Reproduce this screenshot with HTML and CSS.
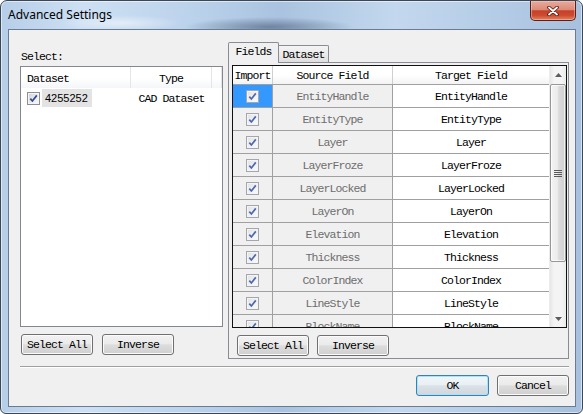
FILE: index.html
```html
<!DOCTYPE html>
<html>
<head>
<meta charset="utf-8">
<title>Advanced Settings</title>
<link rel="stylesheet" href="styles.css">
</head>
<body>
<div class="window">
  <div class="titlebar">
    <span class="title">Advanced Settings</span>
    <div class="close">
      <svg width="12" height="10" viewBox="0 0 12 10"><path d="M2 1.5 L10 8.5 M10 1.5 L2 8.5" stroke="#5a1a10" stroke-width="3.6" stroke-linecap="round"/><path d="M2 1.5 L10 8.5 M10 1.5 L2 8.5" stroke="#ffffff" stroke-width="1.8" stroke-linecap="round"/></svg>
    </div>
  </div>
  <div class="client">
    <div class="top">
      <div class="left">
        <div class="label">Select:</div>
        <div class="listview">
          <div class="lv-head">
            <div class="lv-c1 lv-h">Dataset</div>
            <div class="lv-c2 lv-h">Type</div>
            <div class="lv-c3"></div>
          </div>
          <div class="lv-row">
            <div class="lv-c1"><span class="cb"><svg width="11" height="11" viewBox="0 0 11 11"><path d="M2.3 5.6 L4.4 8 L8.8 2.4" fill="none" stroke="#2d4c96" stroke-width="1.7"/></svg></span><span class="sel">4255252</span></div>
            <div class="lv-c2">CAD Dataset</div>
          </div>
        </div>
        <div class="btnrow lb">
          <button class="btn">Select All</button>
          <button class="btn">Inverse</button>
        </div>
      </div>
      <div class="right">
        <div class="tabs">
          <div class="tab active">Fields</div>
          <div class="tab">Dataset</div>
        </div>
        <div class="page">
          <div class="grid">
            <div class="gtable">
              <div class="grow ghead">
                <div class="gc gi">Import</div>
                <div class="gc gs">Source Field</div>
                <div class="gc gt">Target Field</div>
              </div>
              <div class="grow"><div class="gc gi selcell"><span class="cb dim"><svg width="11" height="11" viewBox="0 0 11 11"><path d="M2.3 5.6 L4.4 8 L8.8 2.4" fill="none" stroke="#4d68ad" stroke-width="1.7"/></svg></span></div><div class="gc gs">EntityHandle</div><div class="gc gt">EntityHandle</div></div>
              <div class="grow"><div class="gc gi"><span class="cb dim"><svg width="11" height="11" viewBox="0 0 11 11"><path d="M2.3 5.6 L4.4 8 L8.8 2.4" fill="none" stroke="#4d68ad" stroke-width="1.7"/></svg></span></div><div class="gc gs">EntityType</div><div class="gc gt">EntityType</div></div>
              <div class="grow"><div class="gc gi"><span class="cb dim"><svg width="11" height="11" viewBox="0 0 11 11"><path d="M2.3 5.6 L4.4 8 L8.8 2.4" fill="none" stroke="#4d68ad" stroke-width="1.7"/></svg></span></div><div class="gc gs">Layer</div><div class="gc gt">Layer</div></div>
              <div class="grow"><div class="gc gi"><span class="cb dim"><svg width="11" height="11" viewBox="0 0 11 11"><path d="M2.3 5.6 L4.4 8 L8.8 2.4" fill="none" stroke="#4d68ad" stroke-width="1.7"/></svg></span></div><div class="gc gs">LayerFroze</div><div class="gc gt">LayerFroze</div></div>
              <div class="grow"><div class="gc gi"><span class="cb dim"><svg width="11" height="11" viewBox="0 0 11 11"><path d="M2.3 5.6 L4.4 8 L8.8 2.4" fill="none" stroke="#4d68ad" stroke-width="1.7"/></svg></span></div><div class="gc gs">LayerLocked</div><div class="gc gt">LayerLocked</div></div>
              <div class="grow"><div class="gc gi"><span class="cb dim"><svg width="11" height="11" viewBox="0 0 11 11"><path d="M2.3 5.6 L4.4 8 L8.8 2.4" fill="none" stroke="#4d68ad" stroke-width="1.7"/></svg></span></div><div class="gc gs">LayerOn</div><div class="gc gt">LayerOn</div></div>
              <div class="grow"><div class="gc gi"><span class="cb dim"><svg width="11" height="11" viewBox="0 0 11 11"><path d="M2.3 5.6 L4.4 8 L8.8 2.4" fill="none" stroke="#4d68ad" stroke-width="1.7"/></svg></span></div><div class="gc gs">Elevation</div><div class="gc gt">Elevation</div></div>
              <div class="grow"><div class="gc gi"><span class="cb dim"><svg width="11" height="11" viewBox="0 0 11 11"><path d="M2.3 5.6 L4.4 8 L8.8 2.4" fill="none" stroke="#4d68ad" stroke-width="1.7"/></svg></span></div><div class="gc gs">Thickness</div><div class="gc gt">Thickness</div></div>
              <div class="grow"><div class="gc gi"><span class="cb dim"><svg width="11" height="11" viewBox="0 0 11 11"><path d="M2.3 5.6 L4.4 8 L8.8 2.4" fill="none" stroke="#4d68ad" stroke-width="1.7"/></svg></span></div><div class="gc gs">ColorIndex</div><div class="gc gt">ColorIndex</div></div>
              <div class="grow"><div class="gc gi"><span class="cb dim"><svg width="11" height="11" viewBox="0 0 11 11"><path d="M2.3 5.6 L4.4 8 L8.8 2.4" fill="none" stroke="#4d68ad" stroke-width="1.7"/></svg></span></div><div class="gc gs">LineStyle</div><div class="gc gt">LineStyle</div></div>
              <div class="grow"><div class="gc gi"><span class="cb dim"><svg width="11" height="11" viewBox="0 0 11 11"><path d="M2.3 5.6 L4.4 8 L8.8 2.4" fill="none" stroke="#4d68ad" stroke-width="1.7"/></svg></span></div><div class="gc gs">BlockName</div><div class="gc gt">BlockName</div></div>
            </div>
            <div class="vscroll">
              <div class="sbtn"><svg width="7" height="4" viewBox="0 0 7 4"><path d="M0 4 L3.5 0 L7 4 Z" fill="#5c5c5c"/></svg></div>
              <div class="thumb">
                <svg width="8" height="7" viewBox="0 0 8 7"><path d="M0 0.5 H8 M0 2.5 H8 M0 4.5 H8 M0 6.5 H8" stroke="#5a5a5a" stroke-width="1"/></svg>
              </div>
              <div class="track"></div>
              <div class="sbtn"><svg width="7" height="4" viewBox="0 0 7 4"><path d="M0 0 L3.5 4 L7 0 Z" fill="#5c5c5c"/></svg></div>
            </div>
          </div>
          <div class="btnrow rb">
            <button class="btn">Select All</button>
            <button class="btn">Inverse</button>
          </div>
        </div>
      </div>
    </div>
    <div class="sep"></div>
    <div class="footer">
      <button class="btn ok">OK</button>
      <button class="btn cancel">Cancel</button>
    </div>
  </div>
</div>
</body>
</html>
```
FILE: styles.css
```css
* { box-sizing: border-box; }
html, body { margin: 0; padding: 0; }
body {
  width: 583px;
  height: 414px;
  overflow: hidden;
  background: #ffffff;
  font-family: "Liberation Mono", "DejaVu Sans Mono", monospace;
  font-size: 11.5px;
  letter-spacing: -0.9px;
  color: #000;
}
.window {
  width: 583px;
  height: 414px;
  border: 1px solid #3b4657;
  border-radius: 7px 7px 6px 6px;
  padding: 0 6px 6px 7px;
  display: flex;
  flex-direction: column;
  background:
    radial-gradient(ellipse 85px 10px at 268px 26px, rgba(60, 78, 105, 0.55), rgba(60, 78, 105, 0)),
    radial-gradient(ellipse 60px 8px at 120px 22px, rgba(255, 255, 255, 0.5), rgba(255, 255, 255, 0)),
    linear-gradient(90deg, #b6cee8 0%, #cde0f3 14%, #bcd3ec 32%, #a9c3e0 48%, #c3d8ee 68%, #b2cae5 88%, #a6c0dd 100%);
  box-shadow: inset 0 0 0 1px rgba(255, 255, 255, 0.55);
}
.titlebar {
  height: 28px;
  flex: none;
  display: flex;
  align-items: flex-start;
}
.title {
  font-family: "Noto Sans", "Liberation Sans", sans-serif;
  font-size: 12px;
  letter-spacing: 0;
  line-height: 16px;
  margin-top: 6px;
  color: #000;
}
.close {
  margin-left: auto;
  width: 46px;
  height: 20px;
  border: 1px solid #5b1f15;
  border-top: none;
  border-radius: 0 0 5px 5px;
  background: linear-gradient(#e8aa9c 0%, #dc8b78 45%, #c5412a 52%, #cd4a2f 75%, #e2835f 100%);
  box-shadow: inset 0 0 0 1px rgba(255, 210, 200, 0.45);
  display: flex;
  align-items: center;
  justify-content: center;
}
.client {
  flex: 1;
  background: #f0f0f0;
  border: 1px solid #6b7b91;
  display: flex;
  flex-direction: column;
  padding: 12px 6px 0 11px;
}
.top {
  display: flex;
  gap: 5px;
  height: 317px;
  flex: none;
}
.left {
  width: 203px;
  display: flex;
  flex-direction: column;
}
.label {
  margin-top: 8px;
  margin-left: 1px;
  height: 14px;
  line-height: 14px;
}
.listview {
  margin-top: 2px;
  height: 261px;
  border: 1px solid #828790;
  background: #fff;
}
.lv-head {
  display: flex;
  height: 21px;
  background: linear-gradient(#ffffff 0%, #ffffff 55%, #f4f6f9 100%);
}
.lv-h { line-height: 21px; padding-top: 1px; }
.lv-c1 {
  width: 110px;
  padding-left: 6px;
  display: flex;
  align-items: center;
}
.lv-c2 {
  width: 81px;
  text-align: center;
  display: flex;
  align-items: center;
  justify-content: center;
}
.lv-head .lv-c1, .lv-head .lv-c2 { border-right: 1px solid #e2e5ea; }
.lv-c3 { flex: 1; border-right: 1px solid #e2e5ea; }
.lv-row {
  display: flex;
  height: 18px;
  margin-top: 1px;
}
.cb {
  width: 13px;
  height: 13px;
  border: 1px solid #8e8f8f;
  background: linear-gradient(135deg, #cdd1d6 0%, #eeeeef 60%, #f8f8f8 100%);
  box-shadow: inset 0 0 0 1px #f4f4f4;
  display: inline-flex;
  flex: none;
}
.cb.dim {
  border-color: #a3a7ad;
  background: linear-gradient(135deg, #dde0e4 0%, #f3f3f4 60%, #fafafa 100%);
}
.sel {
  margin-left: 2px;
  height: 18px;
  line-height: 18px;
  padding: 0 4px 0 3px;
  background: #e3e3e3;
  font-family: "Liberation Sans", Arial, sans-serif;
  font-size: 11px;
  letter-spacing: 0;
}
.btnrow {
  display: flex;
  flex: none;
}
.btnrow.lb { margin-top: 7px; margin-left: 1px; gap: 9px; }
.btnrow.rb { margin-top: 7px; padding-left: 5px; gap: 8px; }
.btn {
  width: 72px;
  height: 21px;
  padding: 1px 0 0;
  border: 1px solid #707070;
  border-radius: 3px;
  background: linear-gradient(#f2f2f2 0%, #ebebeb 45%, #dddddd 52%, #cfcfcf 100%);
  box-shadow: inset 0 0 0 1px #fbfbfb;
  font-family: inherit;
  font-size: 11.5px;
  letter-spacing: -0.9px;
  color: #000;
  line-height: 18px;
}
.btn.ok {
  width: 73px;
  border-color: #3c7fb1;
  box-shadow: inset 0 0 0 1px #a5e4fb;
  background: linear-gradient(#f1f6f9 0%, #e9eff3 45%, #dae2e8 52%, #cfd7dd 100%);
}
.right {
  width: 341px;
  display: flex;
  flex-direction: column;
}
.tabs {
  height: 21px;
  display: flex;
  align-items: flex-end;
  margin-bottom: -1px;
  position: relative;
  z-index: 1;
  flex: none;
}
.tab {
  width: 50px;
  height: 17px;
  margin-bottom: 1px;
  border: 1px solid #898c95;
  border-bottom: none;
  border-left: none;
  border-radius: 0 2px 0 0;
  background: linear-gradient(#f4f4f4 0%, #ebebeb 50%, #dedede 100%);
  text-align: center;
  line-height: 17px;
}
.tab.active {
  width: 51px;
  height: 21px;
  margin-bottom: 0;
  border-left: 1px solid #898c95;
  border-radius: 2px 2px 0 0;
  background: #f0f0f0;
  line-height: 18px;
}
.page {
  flex: 1;
  border: 1px solid #898c95;
  background: #f0f0f0;
  padding: 2px 1px 2px 3px;
  display: flex;
  flex-direction: column;
}
.grid {
  width: 335px;
  height: 263px;
  border: 1px solid #111;
  display: flex;
  background: #fff;
  flex: none;
}
.gtable {
  width: 316px;
  overflow: hidden;
}
.grow {
  display: flex;
  height: 23px;
  border-bottom: 1px solid #a0a0a0;
}
.grow.ghead {
  height: 19px;
  background: linear-gradient(#ffffff 0%, #ffffff 50%, #f3f3f3 100%);
}
.gc {
  display: flex;
  align-items: center;
  justify-content: center;
  white-space: nowrap;
  overflow: hidden;
  padding-top: 1px;
}
.gi {
  width: 40px;
  border-right: 1px solid #a0a0a0;
  background: #f0f0f0;
}
.gs {
  width: 120px;
  border-right: 1px solid #a0a0a0;
  background: #f0f0f0;
  color: #6d6d6d;
}
.gt {
  flex: 1;
  background: #fff;
}
.ghead .gi, .ghead .gs, .ghead .gt { background: transparent; color: #000; }
.ghead .gi, .ghead .gs { border-right-color: #cfcfcf; }
.gi.selcell { background: #3399ff; }
.vscroll {
  width: 17px;
  display: flex;
  flex-direction: column;
  background: linear-gradient(90deg, #e6e6e6 0%, #f4f4f4 25%, #f4f4f4 75%, #eaeaea 100%);
  border-left: 1px solid #ececec;
}
.sbtn {
  height: 17px;
  display: flex;
  align-items: center;
  justify-content: center;
  flex: none;
}
.thumb {
  margin-top: 1px;
  height: 178px;
  border: 1px solid #979797;
  border-radius: 2px;
  background: linear-gradient(90deg, #f3f3f3 0%, #ececec 45%, #dcdcdc 55%, #cfcfcf 100%);
  box-shadow: inset 0 0 0 1px rgba(255, 255, 255, 0.7);
  display: flex;
  align-items: center;
  justify-content: center;
  flex: none;
}
.track { flex: 1; }
.sep {
  margin-top: 7px;
  height: 2px;
  border-top: 1px solid #a0a0a0;
  border-bottom: 1px solid #ffffff;
  flex: none;
}
.footer {
  margin-top: 7px;
  display: flex;
  justify-content: flex-end;
  gap: 8px;
}
```
